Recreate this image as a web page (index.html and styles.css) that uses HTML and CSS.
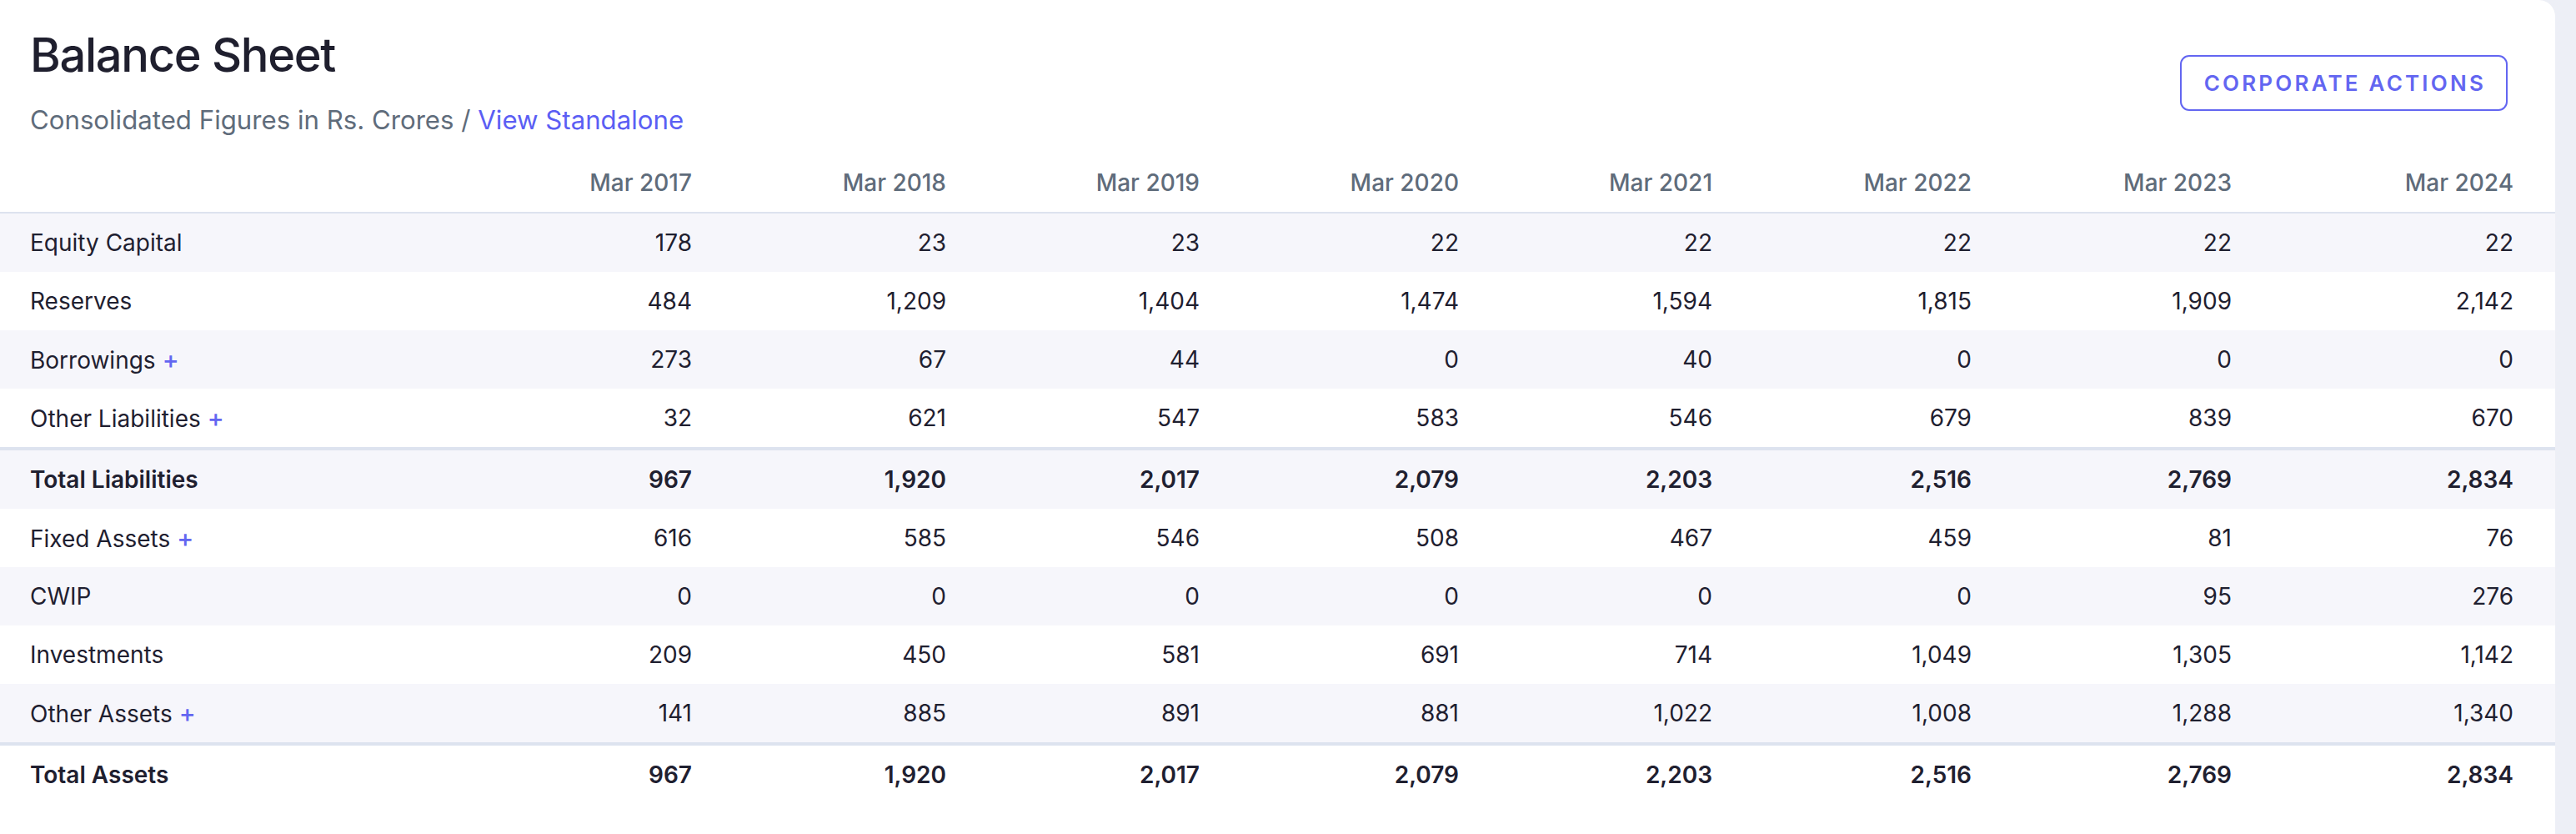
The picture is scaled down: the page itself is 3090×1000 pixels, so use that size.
FILE: index.html
```html
<!DOCTYPE html>
<html lang="en">
<head>
<meta charset="utf-8">
<title>Balance Sheet</title>
<link rel="stylesheet" href="styles.css">
</head>
<body>
<section class="card">
  <header class="card-head">
    <div class="titles">
      <h1 class="title">Balance Sheet</h1>
      <p class="subtitle">Consolidated Figures in Rs. Crores / <a class="link" href="#">View Standalone</a></p>
    </div>
    <button class="btn-outline" type="button">CORPORATE ACTIONS</button>
  </header>

  <div class="sheet">
    <div class="row row-head">
      <div class="cell label"></div>
      <div class="cell">Mar 2017</div>
      <div class="cell">Mar 2018</div>
      <div class="cell">Mar 2019</div>
      <div class="cell">Mar 2020</div>
      <div class="cell">Mar 2021</div>
      <div class="cell">Mar 2022</div>
      <div class="cell">Mar 2023</div>
      <div class="cell">Mar 2024</div>
    </div>
    <div class="body">
      <div class="row">
        <div class="cell label">Equity Capital</div>
        <div class="cell">178</div><div class="cell">23</div><div class="cell">23</div><div class="cell">22</div><div class="cell">22</div><div class="cell">22</div><div class="cell">22</div><div class="cell">22</div>
      </div>
      <div class="row">
        <div class="cell label">Reserves</div>
        <div class="cell">484</div><div class="cell">1,209</div><div class="cell">1,404</div><div class="cell">1,474</div><div class="cell">1,594</div><div class="cell">1,815</div><div class="cell">1,909</div><div class="cell">2,142</div>
      </div>
      <div class="row">
        <div class="cell label">Borrowings<span class="plus">+</span></div>
        <div class="cell">273</div><div class="cell">67</div><div class="cell">44</div><div class="cell">0</div><div class="cell">40</div><div class="cell">0</div><div class="cell">0</div><div class="cell">0</div>
      </div>
      <div class="row">
        <div class="cell label">Other Liabilities<span class="plus">+</span></div>
        <div class="cell">32</div><div class="cell">621</div><div class="cell">547</div><div class="cell">583</div><div class="cell">546</div><div class="cell">679</div><div class="cell">839</div><div class="cell">670</div>
      </div>
      <div class="row row-total">
        <div class="cell label">Total Liabilities</div>
        <div class="cell">967</div><div class="cell">1,920</div><div class="cell">2,017</div><div class="cell">2,079</div><div class="cell">2,203</div><div class="cell">2,516</div><div class="cell">2,769</div><div class="cell">2,834</div>
      </div>
      <div class="row">
        <div class="cell label">Fixed Assets<span class="plus">+</span></div>
        <div class="cell">616</div><div class="cell">585</div><div class="cell">546</div><div class="cell">508</div><div class="cell">467</div><div class="cell">459</div><div class="cell">81</div><div class="cell">76</div>
      </div>
      <div class="row">
        <div class="cell label">CWIP</div>
        <div class="cell">0</div><div class="cell">0</div><div class="cell">0</div><div class="cell">0</div><div class="cell">0</div><div class="cell">0</div><div class="cell">95</div><div class="cell">276</div>
      </div>
      <div class="row">
        <div class="cell label">Investments</div>
        <div class="cell">209</div><div class="cell">450</div><div class="cell">581</div><div class="cell">691</div><div class="cell">714</div><div class="cell">1,049</div><div class="cell">1,305</div><div class="cell">1,142</div>
      </div>
      <div class="row">
        <div class="cell label">Other Assets<span class="plus">+</span></div>
        <div class="cell">141</div><div class="cell">885</div><div class="cell">891</div><div class="cell">881</div><div class="cell">1,022</div><div class="cell">1,008</div><div class="cell">1,288</div><div class="cell">1,340</div>
      </div>
      <div class="row row-total">
        <div class="cell label">Total Assets</div>
        <div class="cell">967</div><div class="cell">1,920</div><div class="cell">2,017</div><div class="cell">2,079</div><div class="cell">2,203</div><div class="cell">2,516</div><div class="cell">2,769</div><div class="cell">2,834</div>
      </div>
    </div>
  </div>
</section>
</body>
</html>
```

FILE: styles.css
```css
html, body {
  margin: 0;
  padding: 0;
}

body {
  background: #edeff6;
  font-family: Inter, "Noto Sans", "Liberation Sans", sans-serif;
  color: #1f2030;
}

.card {
  width: 3065px;
  min-height: 1100px;
  background: #ffffff;
  border-top-right-radius: 20px;
  box-sizing: border-box;
}

.card-head {
  display: flex;
  align-items: center;
  justify-content: space-between;
  padding: 32px 57px 18px 36px;
}

.title {
  margin: 0;
  font-size: 56px;
  line-height: 68px;
  font-weight: 500;
  letter-spacing: -1.3px;
  color: #1f1f2e;
}

.subtitle {
  margin: 22px 0 0;
  font-size: 31.2px;
  line-height: 44px;
  font-weight: 400;
  color: #5f6c7b;
}

.link {
  color: #5b5ef4;
  text-decoration: none;
}

.btn-outline {
  box-sizing: border-box;
  height: 67px;
  padding: 0 24px 0 27px;
  border: 2px solid #6366f1;
  border-radius: 11px;
  background: #ffffff;
  color: #6366f1;
  font-family: Inter, "Noto Sans", sans-serif;
  font-size: 26px;
  font-weight: 600;
  letter-spacing: 3.2px;
  cursor: pointer;
}

.row {
  display: grid;
  grid-template-columns: 500px 330px 305px 304px 311px 304px 311px 312px 338px;
  align-items: center;
  height: 70px;
  padding-right: 50px;
  font-size: 28px;
}

.cell {
  text-align: right;
  white-space: nowrap;
}

.cell.label {
  text-align: left;
  padding-left: 36px;
}

.row-head {
  border-bottom: 2px solid #dde3ef;
  color: #5f6c7b;
  font-weight: 500;
}

.body .row:nth-child(odd) {
  background: #f6f6fb;
}

.row-total {
  border-top: 4px solid #dde3ef;
  font-weight: 600;
}

.plus {
  margin-left: 8px;
  font-size: 30px;
  font-weight: 500;
  color: #6366f1;
}
```
